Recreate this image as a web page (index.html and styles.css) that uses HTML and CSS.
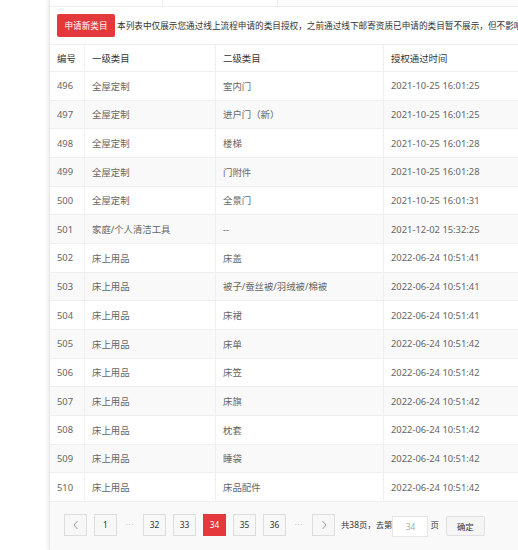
FILE: index.html
```html
<!DOCTYPE html>
<html lang="zh-CN">
<head>
<meta charset="utf-8">
<title>类目授权</title>
<link rel="stylesheet" href="styles.css">
</head>
<body>
<div class="panel">
  <div class="tabs">
    <div class="tab"></div>
    <div class="tab"></div>
    <div class="tab tab-rest"></div>
  </div>
  <div class="toolbar">
    <button class="btn-apply">申请新类目</button>
    <span class="desc">本列表中仅展示您通过线上流程申请的类目授权，之前通过线下邮寄资质已申请的类目暂不展示，但不影响</span>
  </div>
  <div class="grid">
    <div class="row head"><div class="c">编号</div><div class="c">一级类目</div><div class="c">二级类目</div><div class="c">授权通过时间</div></div>
    <div class="row"><div class="c">496</div><div class="c">全屋定制</div><div class="c">室内门</div><div class="c">2021-10-25 16:01:25</div></div>
    <div class="row alt"><div class="c">497</div><div class="c">全屋定制</div><div class="c">进户门（新）</div><div class="c">2021-10-25 16:01:25</div></div>
    <div class="row"><div class="c">498</div><div class="c">全屋定制</div><div class="c">楼梯</div><div class="c">2021-10-25 16:01:28</div></div>
    <div class="row alt"><div class="c">499</div><div class="c">全屋定制</div><div class="c">门附件</div><div class="c">2021-10-25 16:01:28</div></div>
    <div class="row"><div class="c">500</div><div class="c">全屋定制</div><div class="c">全景门</div><div class="c">2021-10-25 16:01:31</div></div>
    <div class="row alt"><div class="c">501</div><div class="c">家庭/个人清洁工具</div><div class="c">--</div><div class="c">2021-12-02 15:32:25</div></div>
    <div class="row"><div class="c">502</div><div class="c">床上用品</div><div class="c">床盖</div><div class="c">2022-06-24 10:51:41</div></div>
    <div class="row alt"><div class="c">503</div><div class="c">床上用品</div><div class="c">被子/蚕丝被/羽绒被/棉被</div><div class="c">2022-06-24 10:51:41</div></div>
    <div class="row"><div class="c">504</div><div class="c">床上用品</div><div class="c">床裙</div><div class="c">2022-06-24 10:51:41</div></div>
    <div class="row alt"><div class="c">505</div><div class="c">床上用品</div><div class="c">床单</div><div class="c">2022-06-24 10:51:42</div></div>
    <div class="row"><div class="c">506</div><div class="c">床上用品</div><div class="c">床笠</div><div class="c">2022-06-24 10:51:42</div></div>
    <div class="row alt"><div class="c">507</div><div class="c">床上用品</div><div class="c">床旗</div><div class="c">2022-06-24 10:51:42</div></div>
    <div class="row"><div class="c">508</div><div class="c">床上用品</div><div class="c">枕套</div><div class="c">2022-06-24 10:51:42</div></div>
    <div class="row alt"><div class="c">509</div><div class="c">床上用品</div><div class="c">睡袋</div><div class="c">2022-06-24 10:51:42</div></div>
    <div class="row"><div class="c">510</div><div class="c">床上用品</div><div class="c">床品配件</div><div class="c">2022-06-24 10:51:42</div></div>
  </div>
  <div class="pager">
    <a class="pg nav"><svg width="8" height="10" viewBox="0 0 8 10"><path d="M5.5 1 L2 5 L5.5 9" fill="none" stroke="#999" stroke-width="1"/></svg></a>
    <a class="pg">1</a>
    <span class="dots">···</span>
    <a class="pg">32</a>
    <a class="pg">33</a>
    <a class="pg cur">34</a>
    <a class="pg">35</a>
    <a class="pg">36</a>
    <span class="dots">···</span>
    <a class="pg nav"><svg width="8" height="10" viewBox="0 0 8 10"><path d="M2.5 1 L6 5 L2.5 9" fill="none" stroke="#999" stroke-width="1"/></svg></a>
    <span class="total">共38页，去第</span>
    <input class="goto" type="text" value="34">
    <span class="unit">页</span>
    <button class="ok">确定</button>
  </div>
</div>
</body>
</html>
```

FILE: styles.css
```css
html, body {
  margin: 0;
  padding: 0;
  background: #fff;
  overflow: hidden;
  height: 550px;
}
body {
  font-family: "Noto Sans", "Noto Sans CJK SC", sans-serif;
  color: #333;
}
.panel {
  margin-left: 49px;
  width: 600px;
  height: 550px;
  background: #fff;
  border-left: 1px solid #e6e6e6;
  box-shadow: -2px 0 3px rgba(0, 0, 0, 0.06);
  display: flex;
  flex-direction: column;
  box-sizing: border-box;
}
.tabs {
  display: grid;
  grid-template-columns: 113px 115px 1fr;
  height: 7px;
  border-bottom: 1px solid #eee;
  box-sizing: border-box;
}
.tab {
  border-right: 1px solid #eee;
}
.tab-rest {
  background: #fcfcfc;
  border-right: none;
}
.toolbar {
  display: flex;
  align-items: center;
  gap: 2px;
  padding: 7px 0 0 7px;
  height: 30px;
  box-sizing: border-box;
  white-space: nowrap;
}
.btn-apply {
  height: 23px;
  width: 58px;
  padding: 0;
  border: none;
  border-radius: 2px;
  background: #e4393c;
  color: #fff;
  font-family: inherit;
  font-size: 8.6px;
  flex: none;
}
.desc {
  font-size: 8.65px;
  color: #333;
}
.grid {
  margin-top: 7px;
}
.row {
  display: grid;
  grid-template-columns: 35px 131px 168px 1fr;
  height: 28.67px;
  border-bottom: 1px solid #efefef;
  box-sizing: border-box;
  font-size: 9.4px;
  color: #666;
}
.row.alt {
  background: #f9f9f9;
}
.row.head {
  height: 28px;
  border-top: 1px solid #efefef;
  color: #333;
  background: #fff;
}
.c {
  display: flex;
  align-items: center;
  padding-left: 7px;
  border-right: 1px solid #efefef;
  white-space: nowrap;
  overflow: hidden;
}
.c:last-child {
  border-right: none;
}
.pager {
  flex: 1;
  background: #f9f9f9;
  display: flex;
  align-items: flex-start;
  padding: 12px 0 0 14px;
  box-sizing: border-box;
  font-size: 8.4px;
  color: #333;
  white-space: nowrap;
}
.pg {
  width: 23px;
  height: 22px;
  box-sizing: border-box;
  border: 1px solid #ddd;
  background: #f7f7f7;
  display: flex;
  align-items: center;
  justify-content: center;
  margin-right: 7px;
  color: #333;
  flex: none;
}
.pg.cur {
  background: #e4393c;
  border-color: #e4393c;
  color: #fff;
}
.dots {
  width: 12px;
  height: 22px;
  display: flex;
  align-items: center;
  justify-content: center;
  color: #bbb;
  margin-right: 7px;
  font-size: 7px;
  letter-spacing: 1px;
}
.total {
  height: 22px;
  line-height: 22px;
  margin-left: -1px;
}
.goto {
  width: 36px;
  height: 21px;
  box-sizing: border-box;
  border: 1px solid #e5e5e5;
  margin: 2px 2px 0 0;
  padding: 0;
  text-align: center;
  font-family: inherit;
  font-size: 8.4px;
  color: #aaa;
  background: #fff;
  outline: none;
}
.unit {
  height: 22px;
  line-height: 22px;
  margin-right: 7px;
}
.ok {
  width: 39px;
  height: 20px;
  margin-top: 2px;
  padding: 0;
  box-sizing: border-box;
  border: 1px solid #e0e0e0;
  border-radius: 2px;
  background: #f5f5f5;
  font-family: inherit;
  font-size: 8.4px;
  color: #333;
}
```
